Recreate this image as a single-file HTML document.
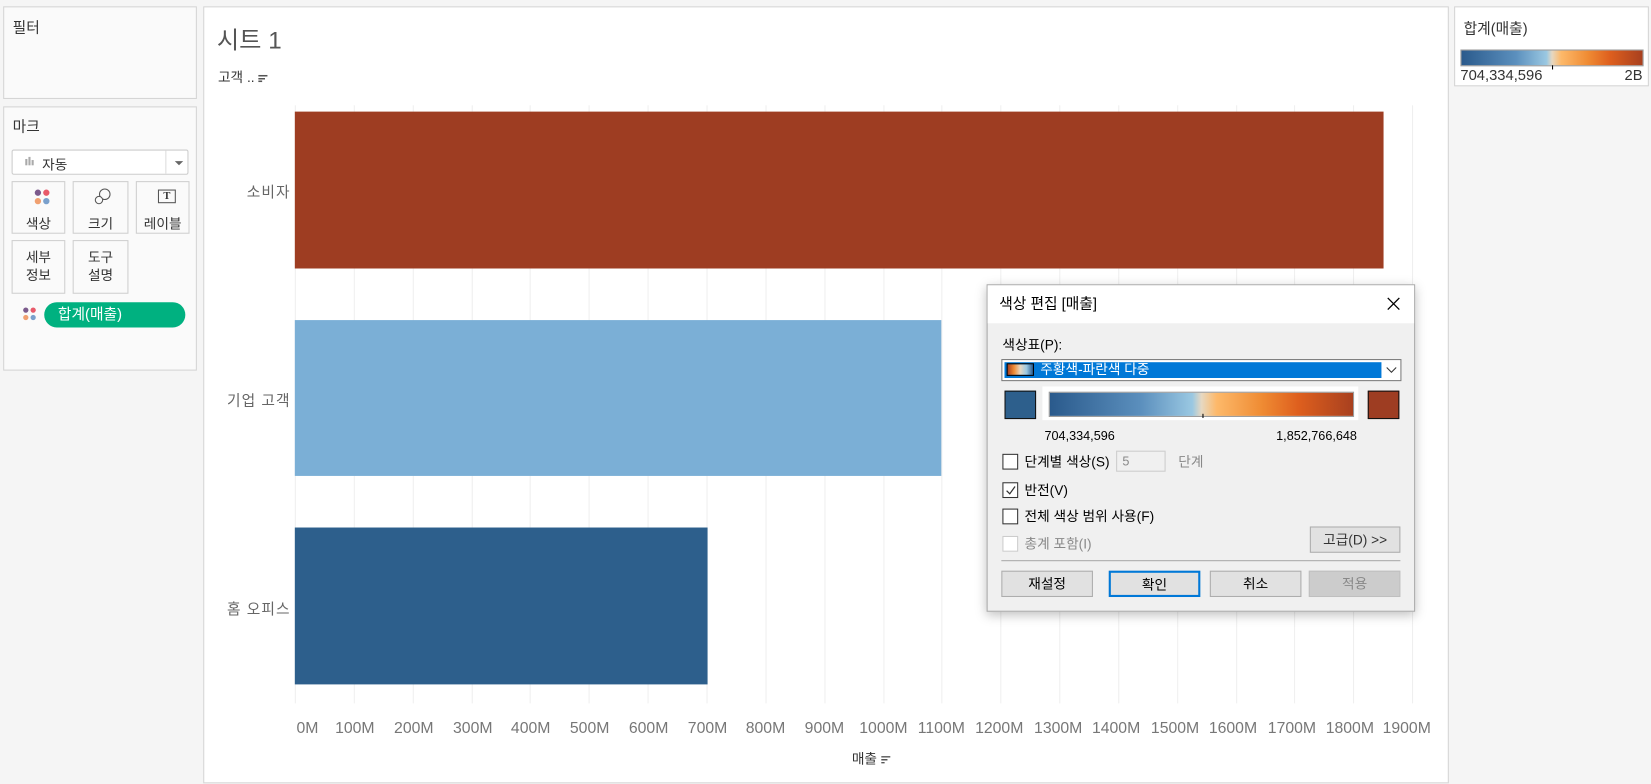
<!DOCTYPE html><html><head><meta charset="utf-8"><style>
*{box-sizing:border-box;margin:0;padding:0}
body{width:1651px;height:784px;background:#f5f5f5;font-family:"Liberation Sans","Noto Sans CJK KR",sans-serif;position:relative;overflow:hidden;color:#333}
#w{position:absolute;left:0;top:0;width:1568px;height:745px;transform:scale(1.05293);transform-origin:0 0}
.a{position:absolute}
.panel{position:absolute;background:#fafafa;border:1px solid #d4d4d4}
.card{position:absolute;background:#fafafa;border:1px solid #cfcfcf;font-size:13px;text-align:center;line-height:17px}
.grid{position:absolute;top:100px;height:568px;width:1px;background:#efefef}
.xl{position:absolute;top:683px;font-size:15px;color:#777;transform:translateX(-50%)}
.yl{position:absolute;font-size:14px;color:#666;right:1292px;letter-spacing:1px}
.cb{position:absolute;width:15px;height:15px;border:1px solid #333;background:#fff}
.dt{position:absolute;font-size:13px;color:#000;line-height:17px}
.btn{position:absolute;top:542px;height:25px;width:87px;border:1px solid #adadad;background:#e1e1e1;font-size:13px;text-align:center;line-height:23px;color:#000}
.grad{background:linear-gradient(to right,#2a5a8c,#5b8fbd 30%,#9ac8e2 47%,#e6d8c2 50%,#fdb96a 55%,#ef8b33 70%,#de5f1e 82%,#a8401f 100%)}
.srt{display:inline-block;vertical-align:middle;width:9px;height:7px;background:linear-gradient(#555 0 1.5px,transparent 1.5px 3px,#555 3px 4.5px,transparent 4.5px 5.5px,#555 5.5px 7px);clip-path:polygon(0 0,100% 0,100% 25%,70% 25%,70% 65%,40% 65%,40% 100%,0 100%)}
</style></head><body><div id="w">
<div class="panel" style="left:3px;top:6px;width:184px;height:88px"><div class="a" style="left:8px;top:9px;font-size:14px">필터</div></div>
<div class="panel" style="left:3px;top:101px;width:184px;height:251px">
<div class="a" style="left:8px;top:8px;font-size:14px">마크</div>
<div class="a" style="left:7px;top:40px;width:168px;height:24px;border:1px solid #ccc;background:#fff;border-radius:2px">
<div class="a" style="left:12px;top:8px;width:2px;height:6px;background:#aaa"></div><div class="a" style="left:15px;top:6px;width:2px;height:8px;background:#aaa"></div><div class="a" style="left:18px;top:9px;width:2px;height:5px;background:#aaa"></div>
<div class="a" style="left:28px;top:3px;font-size:13px">자동</div>
<div class="a" style="left:145px;top:0;width:1px;height:22px;background:#ddd"></div>
<div class="a" style="left:154px;top:10px;border:4px solid transparent;border-top:4px solid #666"></div></div>
<div class="card" style="left:7px;top:70px;width:51px;height:50px;padding-top:31px">색상</div>
<div class="a" style="left:29px;top:78px;width:6px;height:6px;border-radius:50%;background:#7b5a8c"></div>
<div class="a" style="left:37px;top:78px;width:6px;height:6px;border-radius:50%;background:#e85a6a"></div>
<div class="a" style="left:29px;top:86px;width:6px;height:6px;border-radius:50%;background:#f0a070"></div>
<div class="a" style="left:37px;top:86px;width:6px;height:6px;border-radius:50%;background:#7aa0cc"></div>
<div class="card" style="left:65px;top:70px;width:53px;height:50px;padding-top:31px">크기</div>
<div class="a" style="left:90px;top:77px;width:11px;height:11px;border:1px solid #555;border-radius:50%"></div>
<div class="a" style="left:86px;top:84px;width:8px;height:8px;border:1px solid #555;border-radius:50%;background:#fafafa"></div>
<div class="card" style="left:125px;top:70px;width:51px;height:50px;padding-top:31px">레이블</div>
<div class="a" style="left:146px;top:78px;width:17px;height:13px;border:1px solid #555;font-size:10px;line-height:11px;text-align:center;font-family:'Liberation Serif';font-weight:bold">T</div>
<div class="card" style="left:7px;top:126px;width:51px;height:51px;padding-top:7px">세부<br>정보</div>
<div class="card" style="left:65px;top:126px;width:53px;height:51px;padding-top:7px">도구<br>설명</div>
<div class="a" style="left:18px;top:190px;width:5px;height:5px;border-radius:50%;background:#7b5a8c"></div>
<div class="a" style="left:25px;top:190px;width:5px;height:5px;border-radius:50%;background:#e85a6a"></div>
<div class="a" style="left:18px;top:197px;width:5px;height:5px;border-radius:50%;background:#f0a070"></div>
<div class="a" style="left:25px;top:197px;width:5px;height:5px;border-radius:50%;background:#7aa0cc"></div>
<div class="a" style="left:38px;top:185px;width:134px;height:24px;border-radius:12px;background:#00b180;color:#fff;font-size:14px;padding-left:13px;line-height:22px">합계(매출)</div>
</div>
<div class="a" style="left:193px;top:6px;width:1183px;height:738px;background:#fff;border:1px solid #d4d4d4"></div>
<div class="a" style="left:206px;top:19px;font-size:23px;color:#555">시트 1</div>
<div class="a" style="left:207px;top:63px;font-size:13px">고객 .. <span class="srt"></span></div>
<div class="grid" style="left:280px"></div><div class="grid" style="left:336px"></div><div class="grid" style="left:392px"></div><div class="grid" style="left:448px"></div><div class="grid" style="left:503px"></div><div class="grid" style="left:559px"></div><div class="grid" style="left:615px"></div><div class="grid" style="left:671px"></div><div class="grid" style="left:727px"></div><div class="grid" style="left:783px"></div><div class="grid" style="left:839px"></div><div class="grid" style="left:894px"></div><div class="grid" style="left:950px"></div><div class="grid" style="left:1006px"></div><div class="grid" style="left:1062px"></div><div class="grid" style="left:1118px"></div><div class="grid" style="left:1174px"></div><div class="grid" style="left:1229px"></div><div class="grid" style="left:1285px"></div><div class="grid" style="left:1341px"></div>
<div class="a" style="left:280px;top:106px;width:1034px;height:149px;background:#9e3d22"></div>
<div class="a" style="left:280px;top:304px;width:614px;height:148px;background:#7bafd6"></div>
<div class="a" style="left:280px;top:501px;width:392px;height:149px;background:#2d5f8c"></div>
<div class="yl" style="top:172px">소비자</div>
<div class="yl" style="top:370px">기업 고객</div>
<div class="yl" style="top:568px">홈 오피스</div>
<div class="xl" style="left:292px">0M</div><div class="xl" style="left:337px">100M</div><div class="xl" style="left:393px">200M</div><div class="xl" style="left:449px">300M</div><div class="xl" style="left:504px">400M</div><div class="xl" style="left:560px">500M</div><div class="xl" style="left:616px">600M</div><div class="xl" style="left:672px">700M</div><div class="xl" style="left:727px">800M</div><div class="xl" style="left:783px">900M</div><div class="xl" style="left:839px">1000M</div><div class="xl" style="left:894px">1100M</div><div class="xl" style="left:949px">1200M</div><div class="xl" style="left:1005px">1300M</div><div class="xl" style="left:1060px">1400M</div><div class="xl" style="left:1116px">1500M</div><div class="xl" style="left:1171px">1600M</div><div class="xl" style="left:1227px">1700M</div><div class="xl" style="left:1282px">1800M</div><div class="xl" style="left:1336px">1900M</div>
<div class="a" style="left:809px;top:710px;font-size:13px">매출 <span class="srt"></span></div>
<div class="a" style="left:1381px;top:6px;width:185px;height:76px;background:#fff;border:1px solid #d4d4d4">
<div class="a" style="left:8px;top:10px;font-size:14px">합계(매출)</div>
<div class="a grad" style="left:5px;top:40px;width:174px;height:16px;border:1px solid #999"></div>
<div class="a" style="left:92px;top:55px;width:1px;height:4px;background:#000"></div>
<div class="a" style="left:5px;top:56px;font-size:14px">704,334,596</div>
<div class="a" style="right:5px;top:56px;font-size:14px">2B</div></div>
<div class="a" style="left:937px;top:270px;width:407px;height:311px;background:#f0f0f0;border:1px solid #aaa;box-shadow:0 3px 10px rgba(0,0,0,.25)">
<div class="a" style="left:0;top:0;width:405px;height:36px;background:#fff"></div>
<div class="dt" style="left:11px;top:9px;font-size:14px">색상 편집 [매출]</div>
<svg class="a" style="left:379px;top:11px" width="13" height="13"><path d="M1 1L12 12M12 1L1 12" stroke="#000" stroke-width="1.2"/></svg>
<div class="dt" style="left:14px;top:48px">색상표(P):</div>
<div class="a" style="left:13px;top:70px;width:380px;height:21px;border:1px solid #7a7a7a;background:#fff">
<div class="a" style="left:2px;top:2px;width:358px;height:15px;background:#0078d7"></div>
<div class="a" style="left:4px;top:3px;width:26px;height:12px;border:1px solid #000;background:linear-gradient(to right,#a8401f,#ef8b33,#e6d8c2,#9ac8e2,#2a5a8c)"></div>
<div class="a" style="left:36px;top:1px;font-size:13px;line-height:16px;color:#fff">주황색-파란색 다중</div>
<svg class="a" style="left:364px;top:6px" width="11" height="7"><path d="M1 1L5.5 5.5L10 1" stroke="#333" fill="none"/></svg></div>
<div class="a" style="left:16px;top:100px;width:30px;height:27px;background:#2d5f8c;border:1px solid #111"></div>
<div class="a" style="left:52px;top:96px;width:300px;height:32px;background:#fff"></div>
<div class="a grad" style="left:58px;top:101px;width:290px;height:24px;border:1px solid #999"></div>
<div class="a" style="left:204px;top:122px;width:1px;height:4px;background:#000"></div>
<div class="a" style="left:361px;top:100px;width:30px;height:27px;background:#9e3d22;border:1px solid #111"></div>
<div class="dt" style="left:54px;top:135px;font-size:12px">704,334,596</div>
<div class="dt" style="left:274px;top:135px;font-size:12px">1,852,766,648</div>
<div class="cb" style="left:14px;top:160px"></div><div class="dt" style="left:35px;top:159px">단계별 색상(S)</div>
<div class="a" style="left:122px;top:157px;width:47px;height:20px;border:1px solid #ccc;background:#f0f0f0;font-size:12px;color:#888;padding:2px 5px">5</div>
<div class="dt" style="left:181px;top:159px;color:#888">단계</div>
<div class="cb" style="left:14px;top:187px"><svg class="a" style="left:2px;top:2px" width="10" height="10"><path d="M1 5L4 8L9 1" stroke="#333" fill="none" stroke-width="1.2"/></svg></div><div class="dt" style="left:35px;top:186px">반전(V)</div>
<div class="cb" style="left:14px;top:212px"></div><div class="dt" style="left:35px;top:211px">전체 색상 범위 사용(F)</div>
<div class="cb" style="left:14px;top:238px;border-color:#ccc"></div><div class="dt" style="left:35px;top:237px;color:#888">총계 포함(I)</div>
<div class="a" style="left:306px;top:229px;width:86px;height:25px;border:1px solid #adadad;background:#e1e1e1;font-size:13px;text-align:center;line-height:23px">고급(D) &gt;&gt;</div>
<div class="a" style="left:13px;top:261px;width:379px;height:1px;background:#aaa"></div>
</div>
<div class="btn" style="left:951px">재설정</div>
<div class="btn" style="left:1053px;border:2px solid #0078d7">확인</div>
<div class="btn" style="left:1149px">취소</div>
<div class="btn" style="left:1243px;background:#ccc;border-color:#bfbfbf;color:#888">적용</div>
</div></body></html>
